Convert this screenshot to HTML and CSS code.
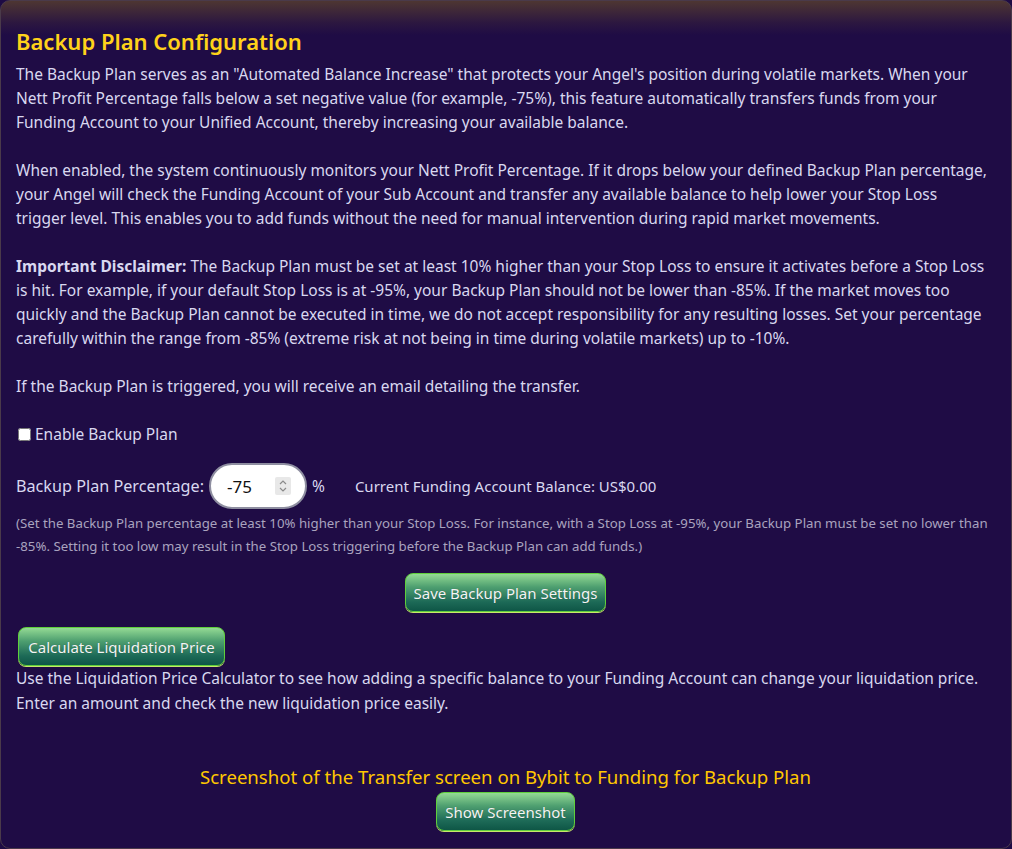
FILE: index.html
```html
<!DOCTYPE html>
<html lang="en">
<head>
<meta charset="utf-8">
<title>Backup Plan Configuration</title>
<link rel="stylesheet" href="styles.css">
</head>
<body>
<div class="card">
  <h2 class="title">Backup Plan Configuration</h2>
  <p class="para">The Backup Plan serves as an "Automated Balance Increase" that protects your Angel's position during volatile markets. When your Nett Profit Percentage falls below a set negative value (for example, -75%), this feature automatically transfers funds from your Funding Account to your Unified Account, thereby increasing your available balance.</p>
  <p class="para">When enabled, the system continuously monitors your Nett Profit Percentage. If it drops below your defined Backup Plan percentage, your Angel will check the Funding Account of your Sub Account and transfer any available balance to help lower your Stop Loss trigger level. This enables you to add funds without the need for manual intervention during rapid market movements.</p>
  <p class="para"><strong>Important Disclaimer:</strong> The Backup Plan must be set at least 10% higher than your Stop Loss to ensure it activates before a Stop Loss is hit. For example, if your default Stop Loss is at -95%, your Backup Plan should not be lower than -85%. If the market moves too quickly and the Backup Plan cannot be executed in time, we do not accept responsibility for any resulting losses. Set your percentage carefully within the range from -85% (extreme risk at not being in time during volatile markets) up to -10%.</p>
  <p class="para">If the Backup Plan is triggered, you will receive an email detailing the transfer.</p>
  <label class="check"><input type="checkbox" class="check-box"><span>Enable Backup Plan</span></label>
  <div class="pct-row">
    <span class="pct-label">Backup Plan Percentage:</span>
    <div class="pct-input">
      <span class="pct-value">-75</span>
      <span class="spin"><svg width="10" height="16" viewBox="0 0 10 16"><path d="M2 6 L5 3 L8 6" fill="none" stroke="#8a8a8a" stroke-width="1.2"/><path d="M2 10 L5 13 L8 10" fill="none" stroke="#8a8a8a" stroke-width="1.2"/></svg></span>
    </div>
    <span class="pct-sign">%</span>
    <span class="balance">Current Funding Account Balance: US$0.00</span>
  </div>
  <p class="note">(Set the Backup Plan percentage at least 10% higher than your Stop Loss. For instance, with a Stop Loss at -95%, your Backup Plan must be set no lower than -85%. Setting it too low may result in the Stop Loss triggering before the Backup Plan can add funds.)</p>
  <div class="center"><button class="btn btn-save">Save Backup Plan Settings</button></div>
  <div><button class="btn btn-calc">Calculate Liquidation Price</button></div>
  <p class="para calc-text">Use the Liquidation Price Calculator to see how adding a specific balance to your Funding Account can change your liquidation price. Enter an amount and check the new liquidation price easily.</p>
  <p class="caption">Screenshot of the Transfer screen on Bybit to Funding for Backup Plan</p>
  <div class="center"><button class="btn btn-show">Show Screenshot</button></div>
</div>
</body>
</html>
```
FILE: styles.css
```css
html,body{margin:0;padding:0;background:#1e0b44}
body{font-family:"Noto Sans",sans-serif;color:#d9d8f0}
.card{
  box-sizing:border-box;
  height:849px;
  padding:25px 20px 0 15px;
  border:1px solid #4a3a4a;
  border-radius:10px;
  background:linear-gradient(to bottom,#4e3632 0px,#2c1740 22px,#1f0c45 34px,#1f0c45 100%);
}
.title{margin:0 0 6px 0;font-size:22px;line-height:30px;font-weight:600;color:#ffd21a}
.para{margin:0 0 24px 0;font-size:15.5px;line-height:24px}
.para strong{font-weight:700}
.check{display:flex;align-items:center;font-size:15.5px;line-height:24px;height:24px;margin-top:1px}
.check-box{margin:0 4px 0 2px;width:13px;height:13px}
.pct-row{display:flex;align-items:center;margin-top:17px;height:46px;font-size:15.5px}
.pct-label{margin-right:5px;font-size:16.2px}
.pct-input{
  box-sizing:border-box;
  width:98px;height:46px;
  border:2px solid #8e8ea0;
  border-radius:23px;
  background:#fff;
  display:flex;align-items:center;
  padding:0 14px 0 16px;
  justify-content:space-between;
}
.pct-value{color:#111;font-size:17px}
.spin{display:flex;align-items:center;justify-content:center;width:16px;height:18px;background:#e8e8e8;border-radius:2px}
.pct-sign{margin-left:5px}
.balance{margin-left:30px;font-size:15px}
.note{margin:3px 0 0 0;font-size:13.25px;line-height:23px;color:#a9a3bf}
.center{text-align:center;margin-right:-4px}
.btn{
  font-family:"Noto Sans",sans-serif;
  font-size:15px;
  color:#f4f4f4;
  height:39px;
  padding:0 6px;
  border:1px solid #5fcf3c;
  border-radius:8px;
  background:linear-gradient(to bottom,#94da94 0%,#4e9f70 35%,#1d6a57 75%,#0e5646 100%);
  box-shadow:0 1px 0 #c8e86a;
  text-shadow:0 0 1px rgba(0,0,0,0.3);
}
.btn-save{margin-top:15px;width:201px}
.btn-calc{margin-top:15px;margin-left:2px;width:207px}
.btn-show{margin-top:3px;width:139px}
.calc-text{margin:0;line-height:25px}
.caption{margin:49px -4px 0 0;text-align:center;font-size:18.6px;line-height:24px;color:#ffc800}
```
